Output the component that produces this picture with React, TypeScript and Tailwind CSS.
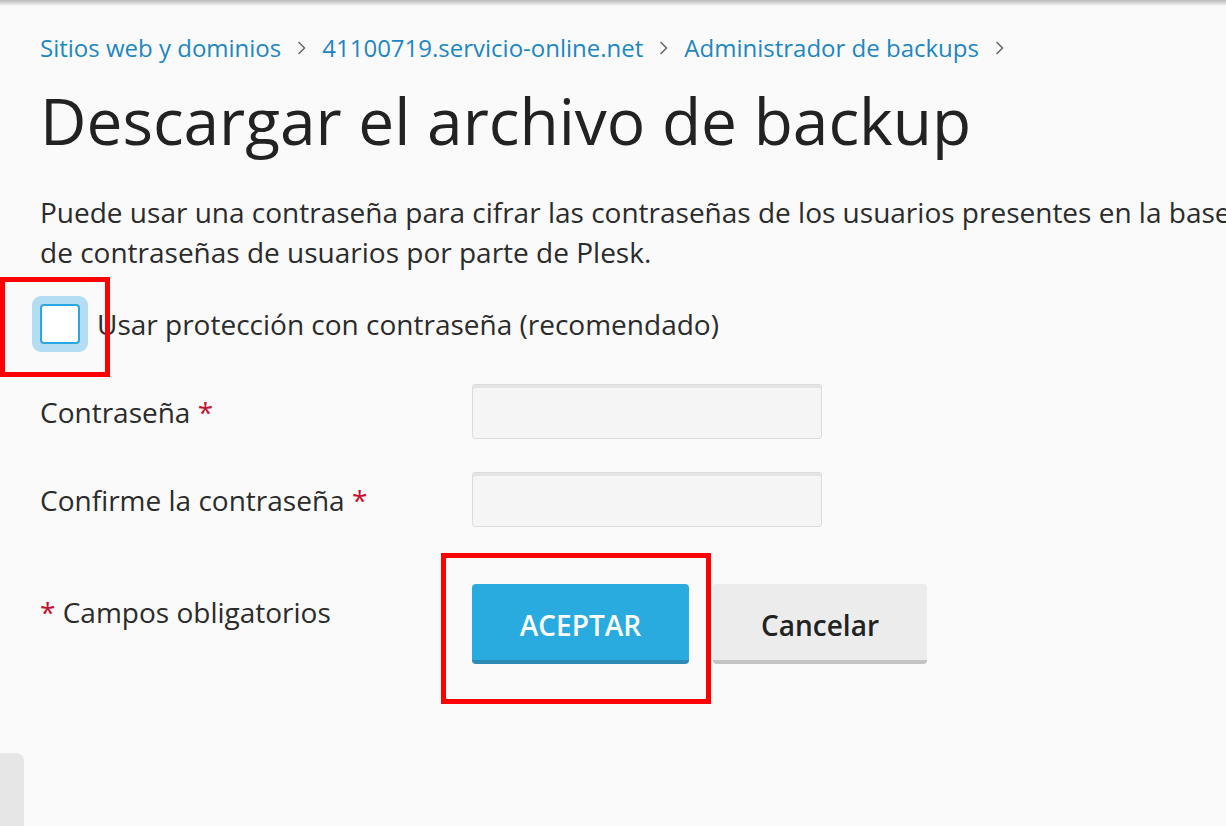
const Chevron = () => (
  <svg width="11" height="16" viewBox="0 0 11 16" className="mx-[15px] shrink-0">
    <polyline points="2.5,2 8.5,8 2.5,14" fill="none" stroke="#6b6b6b" strokeWidth="1.6" />
  </svg>
);

const Req = () => <span className="text-[#c8102e]">*</span>;

const App = () => {
  const crumbs = ["Sitios web y dominios", "41100719.servicio-online.net", "Administrador de backups"];

  return (
    <div className="relative w-[1226px] h-[826px] overflow-hidden bg-[#fafafa] text-[#2b2b2b] font-['Open_Sans',sans-serif]">
      <div className="h-[6px] bg-gradient-to-b from-[#b9b9b9] to-[#fafafa]" />

      <div className="pl-[40px]">
        <nav className="mt-[26px] flex items-center h-[32px] text-[24px] leading-[32px] whitespace-nowrap">
          {crumbs.map((c) => (
            <span key={c} className="flex items-center">
              <a className="text-[#1d87c2]">{c}</a>
              <Chevron />
            </span>
          ))}
        </nav>

        <h1 className="mt-[13px] text-[64px] leading-[88px] font-normal text-[#222] whitespace-nowrap">
          Descargar el archivo de backup
        </h1>

        <div className="mt-[27px] text-[28px] leading-[40px] whitespace-nowrap">
          <p>Puede usar una contraseña para cifrar las contraseñas de los usuarios presentes en la base de datos del backup y evitar el acceso</p>
          <p>de contraseñas de usuarios por parte de Plesk.</p>
        </div>

        <label className="mt-[24px] flex items-center h-[56px]">
          <span className="ml-[-8px] p-[8px] rounded-[9px] bg-[#b3ddf3]">
            <span className="block w-[40px] h-[40px] rounded-[4px] border-2 border-[#29a8df] bg-white" />
          </span>
          <span className="ml-[9px] text-[28px] leading-[40px] whitespace-nowrap">
            Usar protección con contraseña (recomendado)
          </span>
        </label>

        <div className="mt-[32px] flex items-center">
          <div className="w-[432px] text-[28px] leading-[40px]">
            Contraseña <Req />
          </div>
          <input type="password" className="w-[350px] h-[55px] bg-[#f5f5f5] border border-[#dcdcdc] rounded-[3px] shadow-[inset_0_3px_0_#e4e4e4] outline-none" />
        </div>

        <div className="mt-[33px] flex items-center">
          <div className="w-[432px] text-[28px] leading-[40px]">
            Confirme la contraseña <Req />
          </div>
          <input type="password" className="w-[350px] h-[55px] bg-[#f5f5f5] border border-[#dcdcdc] rounded-[3px] shadow-[inset_0_3px_0_#e4e4e4] outline-none" />
        </div>

        <div className="mt-[57px] flex items-start">
          <div className="w-[432px] pt-[8px] text-[28px] leading-[40px]">
            <Req /> Campos obligatorios
          </div>
          <button className="w-[217px] h-[80px] pt-[6px] rounded-[4px] bg-[#29abe0] border-b-4 border-[#2b8bb5] text-white text-[28px] font-semibold">
            ACEPTAR
          </button>
          <button className="ml-[24px] w-[214px] h-[80px] pt-[6px] rounded-[4px] bg-[#ececec] border-b-4 border-[#c3c3c3] text-[#222] text-[28px] font-semibold">
            Cancelar
          </button>
        </div>
      </div>

      <div className="absolute left-0 top-[753px] w-[24px] h-[73px] rounded-tr-[8px] bg-[#e6e6e6]" />

      <div className="absolute left-0 top-[277px] w-[110px] h-[100px] border-[5px] border-[#ff0000]" />
      <div className="absolute left-[441px] top-[553px] w-[270px] h-[151px] border-[5px] border-[#ff0000]" />
    </div>
  );
};

export default App;
